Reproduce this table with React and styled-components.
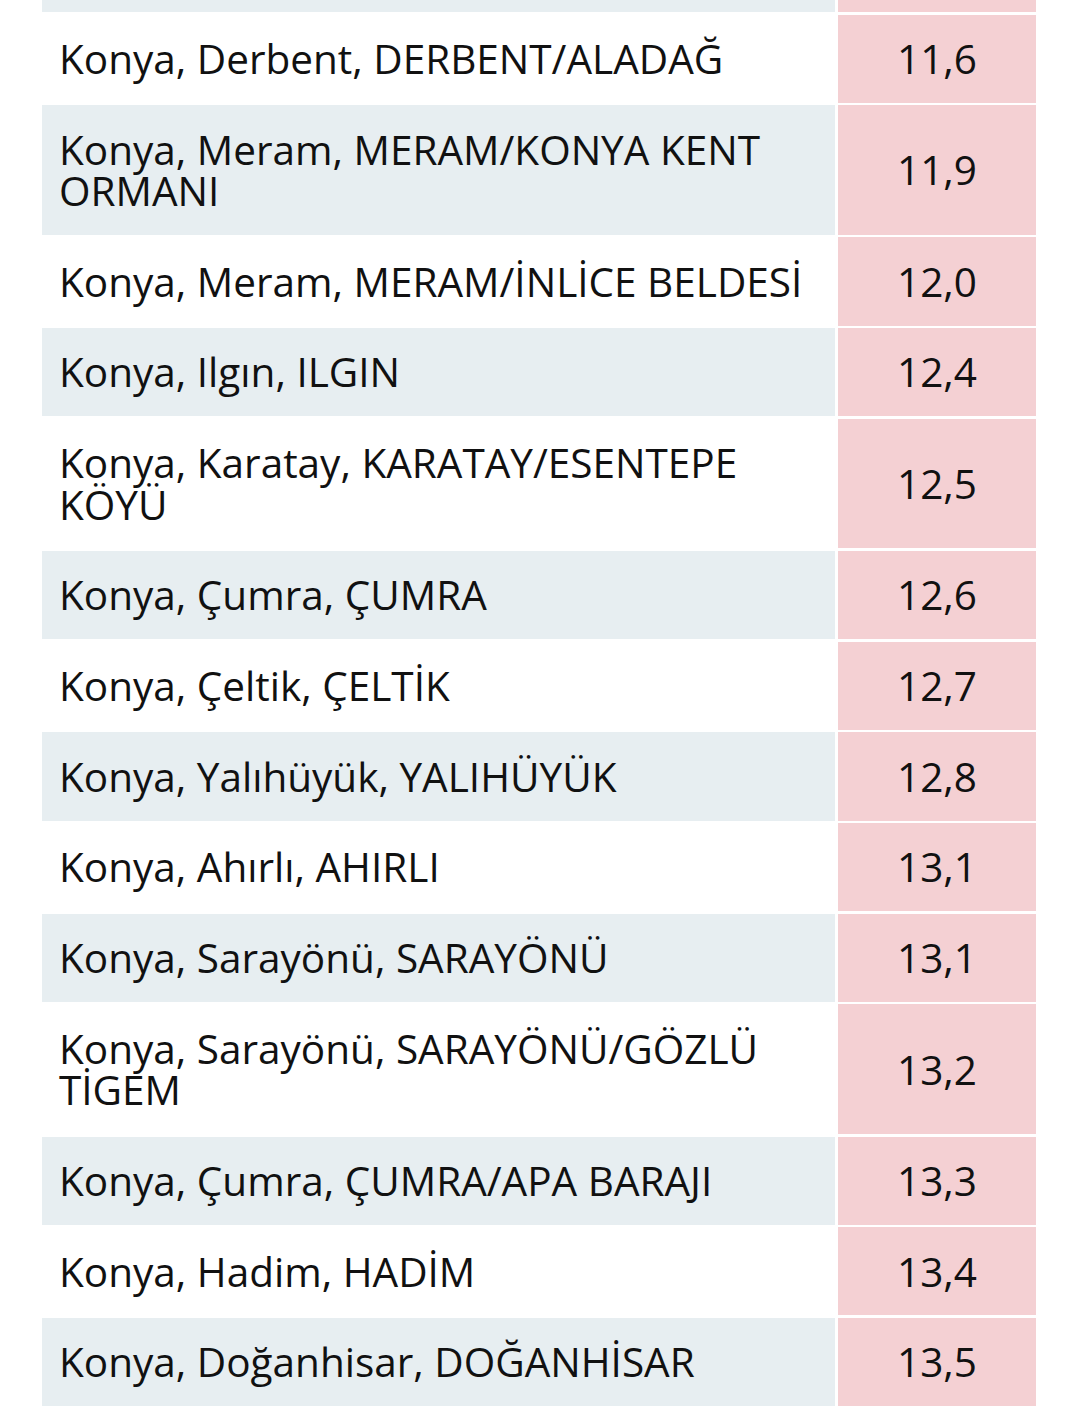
import React from 'react'
import styled, { createGlobalStyle } from 'styled-components'

const rows = [
  { place: 'Konya, Derbent, DERBENT/ALADAĞ', value: '11,6' },
  { place: 'Konya, Meram, MERAM/KONYA KENT ORMANI', value: '11,9' },
  { place: 'Konya, Meram, MERAM/İNLİCE BELDESİ', value: '12,0' },
  { place: 'Konya, Ilgın, ILGIN', value: '12,4' },
  { place: 'Konya, Karatay, KARATAY/ESENTEPE KÖYÜ', value: '12,5' },
  { place: 'Konya, Çumra, ÇUMRA', value: '12,6' },
  { place: 'Konya, Çeltik, ÇELTİK', value: '12,7' },
  { place: 'Konya, Yalıhüyük, YALIHÜYÜK', value: '12,8' },
  { place: 'Konya, Ahırlı, AHIRLI', value: '13,1' },
  { place: 'Konya, Sarayönü, SARAYÖNÜ', value: '13,1' },
  { place: 'Konya, Sarayönü, SARAYÖNÜ/GÖZLÜ TİGEM', value: '13,2' },
  { place: 'Konya, Çumra, ÇUMRA/APA BARAJI', value: '13,3' },
  { place: 'Konya, Hadim, HADİM', value: '13,4' },
  { place: 'Konya, Doğanhisar, DOĞANHİSAR', value: '13,5' },
]

export default function App() {
  return (
    <>
      <GlobalStyle />
      <Page>
        <Table>
          <PlaceCell $shaded $clipped />
          <ValueCell $clipped />
          {rows.map((row, i) => (
            <React.Fragment key={row.place + i}>
              <PlaceCell $shaded={i % 2 === 1}>{row.place}</PlaceCell>
              <ValueCell>{row.value}</ValueCell>
            </React.Fragment>
          ))}
        </Table>
      </Page>
    </>
  )
}

const GlobalStyle = createGlobalStyle`
  body {
    margin: 0;
    background: #fff;
    font-family: 'Open Sans', 'Noto Sans', sans-serif;
    color: #111;
  }
`

const Page = styled.div`
  padding-left: 42px;
  height: 1409px;
  overflow: hidden;
`

const Table = styled.div`
  display: grid;
  grid-template-columns: 793px 198px;
  column-gap: 3px;
  row-gap: 2.6px;
  width: 994px;
`

const Cell = styled.div`
  font-size: 40.5px;
  line-height: 41.5px;
  padding: ${(p) => (p.$clipped ? '0' : '23.3px 17px')};
  height: ${(p) => (p.$clipped ? '12px' : 'auto')};
  display: flex;
  align-items: center;
`

const PlaceCell = styled(Cell)`
  background: ${(p) => (p.$shaded ? '#e7eef1' : '#fff')};
`

const ValueCell = styled(Cell)`
  background: #f4d0d3;
  justify-content: center;
`
